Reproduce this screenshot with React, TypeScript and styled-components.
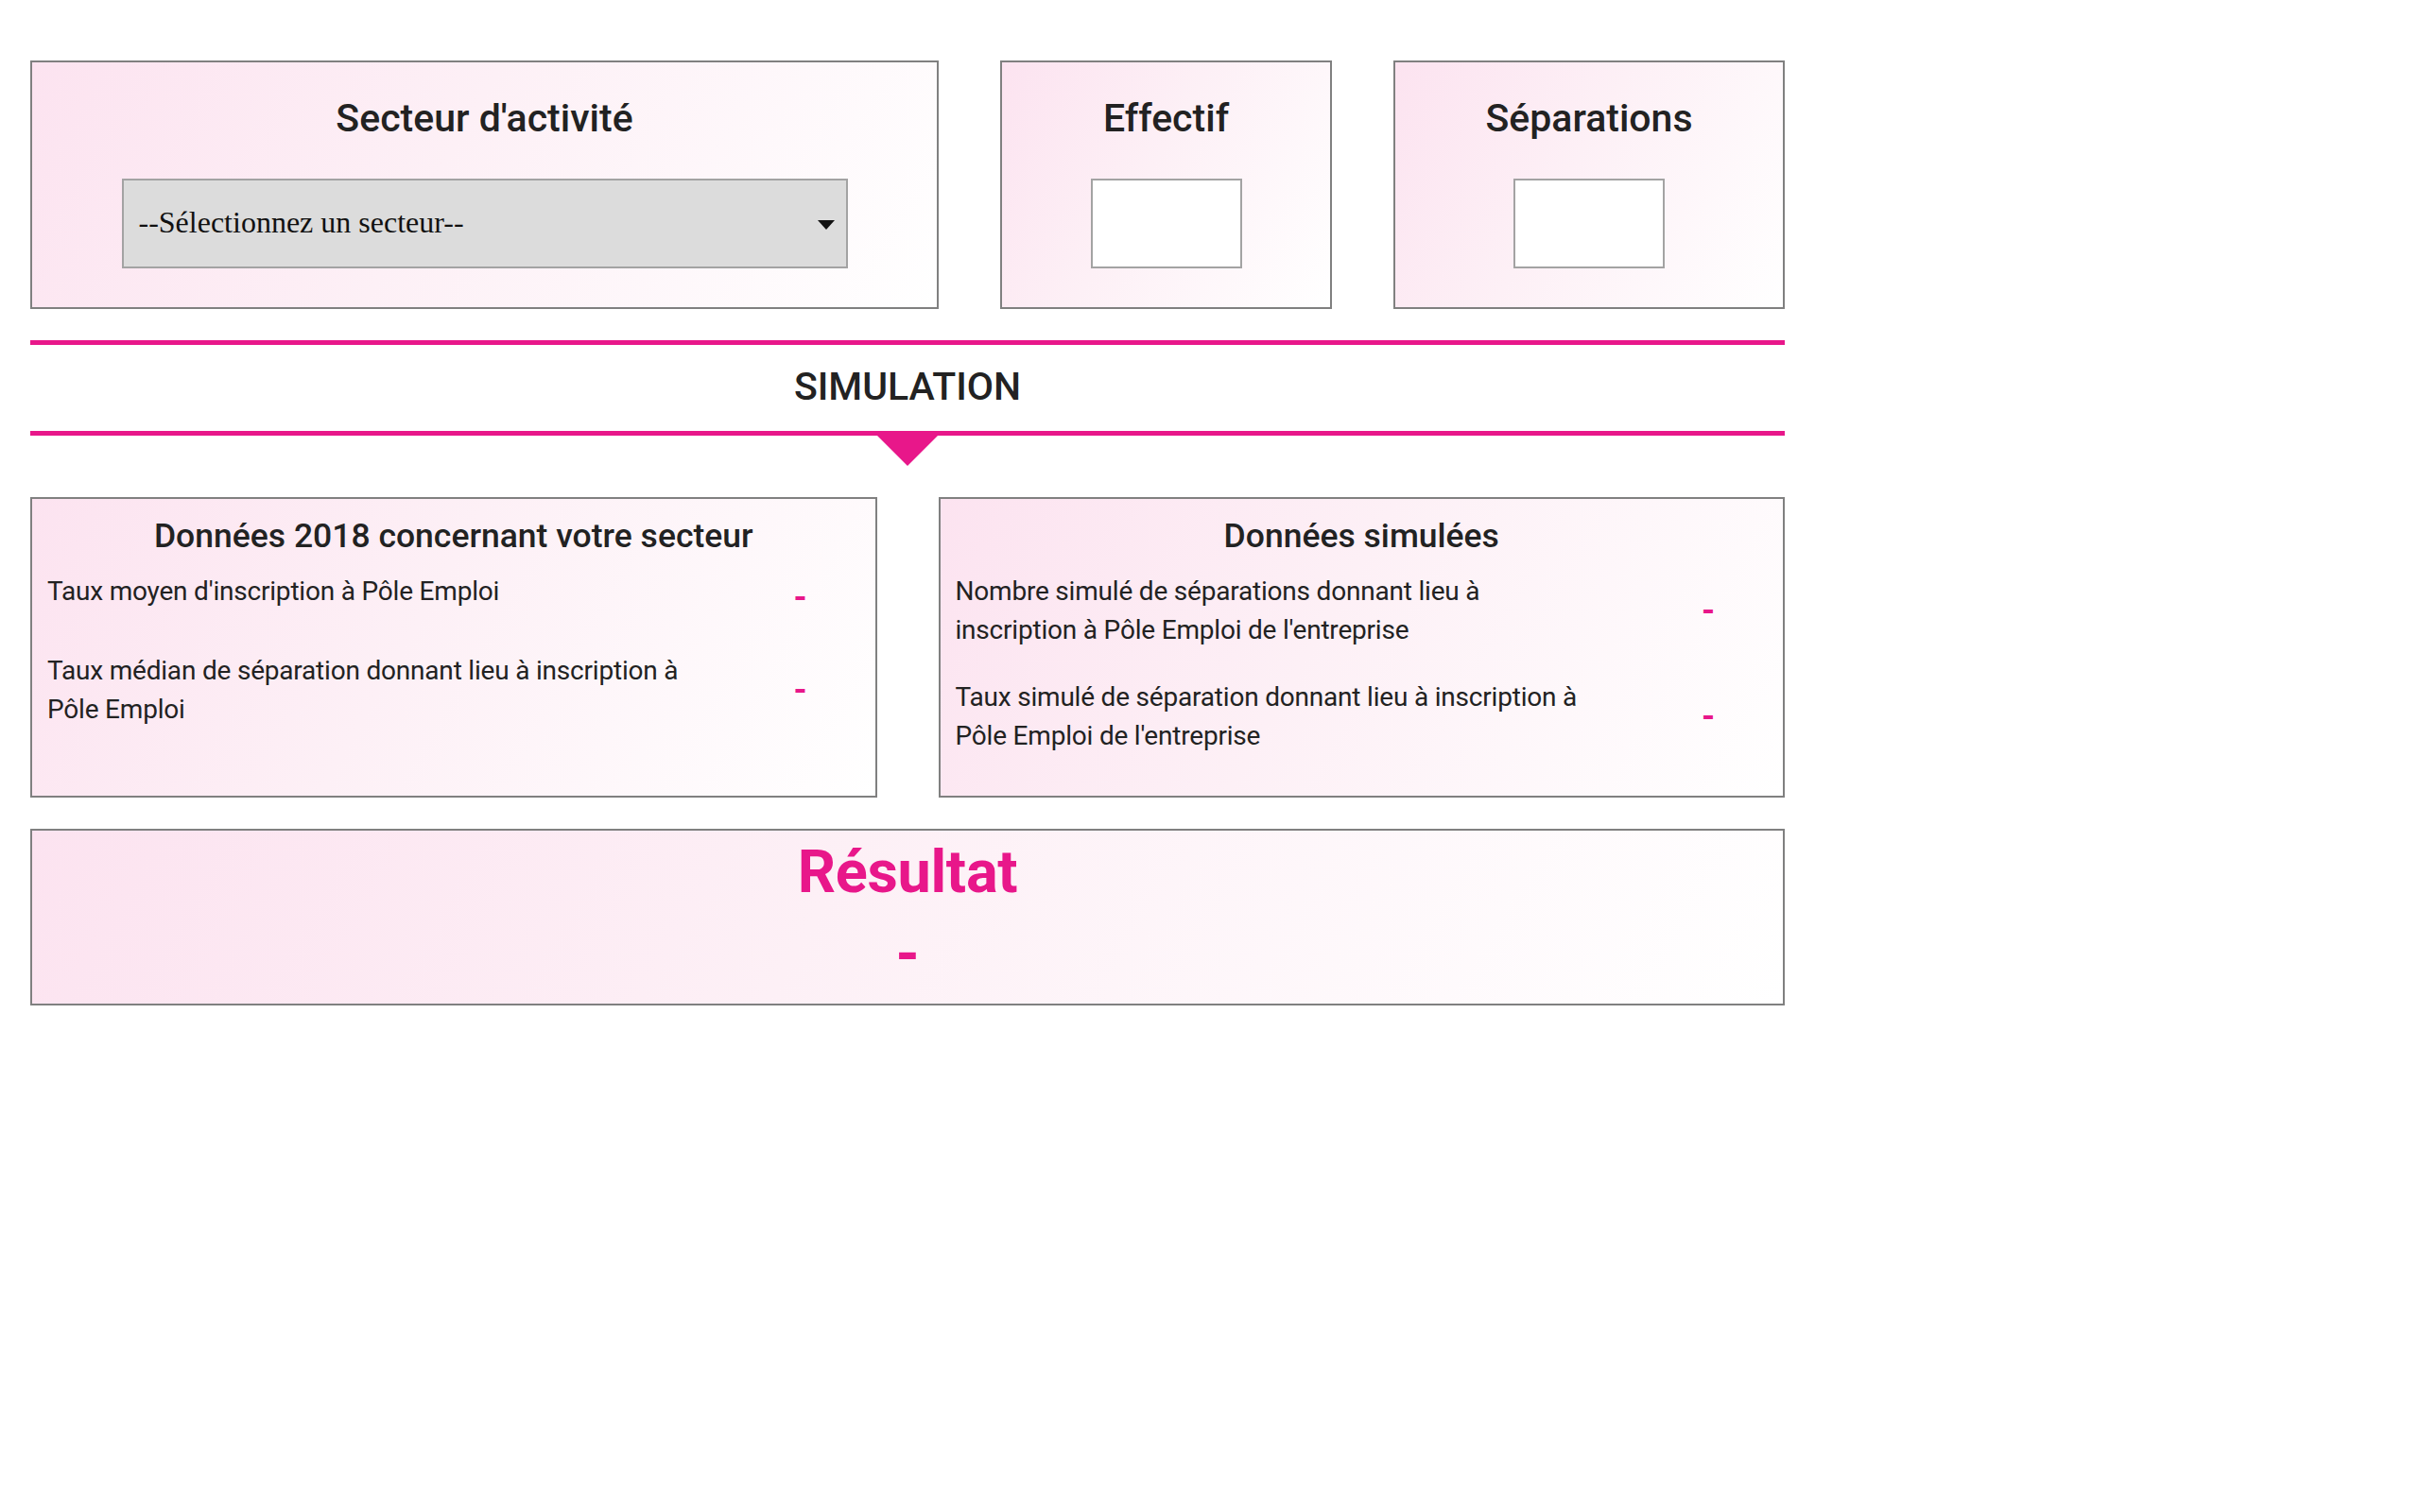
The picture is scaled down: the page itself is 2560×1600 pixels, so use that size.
import React from "react"
import styled, { createGlobalStyle } from "styled-components"

const PINK = "#e8178a"
const INK = "#222222"

const GlobalStyle = createGlobalStyle`
  body {
    margin: 0;
    background: #ffffff;
    font-family: Roboto, "Liberation Sans", sans-serif;
    color: ${INK};
  }
`

const SECTOR_ROWS = [
  { label: "Taux moyen d'inscription à Pôle Emploi", value: "-" },
  {
    label: "Taux médian de séparation donnant lieu à inscription à Pôle Emploi",
    value: "-",
  },
]

const SIMULATED_ROWS = [
  {
    label:
      "Nombre simulé de séparations donnant lieu à inscription à Pôle Emploi de l'entreprise",
    value: "-",
  },
  {
    label:
      "Taux simulé de séparation donnant lieu à inscription à Pôle Emploi de l'entreprise",
    value: "-",
  },
]

export default function App() {
  const [sector, setSector] = React.useState("")
  const [staff, setStaff] = React.useState("")
  const [separations, setSeparations] = React.useState("")

  return (
    <Page>
      <GlobalStyle />
      <InputsRow>
        <InputCard>
          <CardTitle>Secteur d'activité</CardTitle>
          <SelectWrap>
            <Select value={sector} onChange={(e) => setSector(e.target.value)}>
              <option value="">--Sélectionnez un secteur--</option>
            </Select>
            <SelectArrow />
          </SelectWrap>
        </InputCard>
        <InputCard>
          <CardTitle>Effectif</CardTitle>
          <NumberInput
            value={staff}
            onChange={(e) => setStaff(e.target.value)}
          />
        </InputCard>
        <InputCard>
          <CardTitle>Séparations</CardTitle>
          <NumberInput
            value={separations}
            onChange={(e) => setSeparations(e.target.value)}
          />
        </InputCard>
      </InputsRow>

      <SimulationHeader>SIMULATION</SimulationHeader>

      <DataGrid>
        <DataCard>
          <DataTitle>Données 2018 concernant votre secteur</DataTitle>
          {SECTOR_ROWS.map((row) => (
            <DataRow key={row.label}>
              <DataLabel>{row.label}</DataLabel>
              <DataValue>{row.value}</DataValue>
            </DataRow>
          ))}
        </DataCard>
        <DataCard>
          <DataTitle>Données simulées</DataTitle>
          {SIMULATED_ROWS.map((row) => (
            <DataRow key={row.label}>
              <DataLabel>{row.label}</DataLabel>
              <DataValue>{row.value}</DataValue>
            </DataRow>
          ))}
        </DataCard>
      </DataGrid>

      <ResultCard>
        <ResultTitle>Résultat</ResultTitle>
        <ResultValue>-</ResultValue>
      </ResultCard>
    </Page>
  )
}

const Page = styled.div`
  width: 1856px;
  padding: 64px 32px;
  display: flex;
  flex-direction: column;
`

const cardCSS = `
  box-sizing: border-box;
  border: 2px solid #808080;
  background: linear-gradient(120deg, #fce3f0 0%, #fdf0f6 45%, #ffffff 100%);
`

const InputsRow = styled.div`
  display: grid;
  grid-template-columns: 961px 351px 414px;
  gap: 65px;
`

const InputCard = styled.div`
  ${cardCSS}
  display: flex;
  flex-direction: column;
  align-items: center;
  padding: 38px 0 41px;
  gap: 42px;
`

const CardTitle = styled.div`
  font-size: 41px;
  font-weight: 500;
  line-height: 43px;
  color: ${INK};
`

const SelectWrap = styled.div`
  position: relative;
  width: 768px;
  height: 95px;
`

const Select = styled.select`
  appearance: none;
  box-sizing: border-box;
  width: 100%;
  height: 100%;
  margin: 0;
  padding: 0 16px 4px;
  background: #dcdcdc;
  border: 2px solid #a3a3a3;
  border-radius: 0;
  font-family: "Liberation Serif", serif;
  font-size: 32px;
  color: #111111;
  outline: none;
`

const SelectArrow = styled.span`
  position: absolute;
  right: 14px;
  top: 44px;
  width: 0;
  height: 0;
  border-left: 9px solid transparent;
  border-right: 9px solid transparent;
  border-top: 10px solid #111111;
  pointer-events: none;
`

const NumberInput = styled.input`
  box-sizing: border-box;
  width: 160px;
  height: 95px;
  margin: 0;
  background: #ffffff;
  border: 2px solid #a3a3a3;
  border-radius: 0;
  outline: none;
`

const SimulationHeader = styled.div`
  position: relative;
  margin-top: 33px;
  border-top: 5px solid ${PINK};
  border-bottom: 5px solid ${PINK};
  padding: 20px 0 23px;
  text-align: center;
  font-size: 41px;
  font-weight: 500;
  line-height: 48px;
  color: ${INK};

  &::after {
    content: "";
    position: absolute;
    left: 50%;
    bottom: -37px;
    transform: translateX(-50%);
    border-left: 32px solid transparent;
    border-right: 32px solid transparent;
    border-top: 32px solid ${PINK};
  }
`

const DataGrid = styled.div`
  margin-top: 65px;
  display: grid;
  grid-template-columns: 1fr 1fr;
  gap: 65px;
`

const DataCard = styled.div`
  ${cardCSS}
  display: flex;
  flex-direction: column;
  padding: 18px 16px 43px;
`

const DataTitle = styled.div`
  text-align: center;
  font-size: 35.5px;
  font-weight: 500;
  line-height: 43px;
  margin-bottom: 16px;
`

const DataRow = styled.div`
  display: flex;
  align-items: center;
  & + & {
    margin-top: 30px;
  }
`

const DataLabel = styled.div`
  align-self: flex-start;
  flex: 0 0 690px;
  font-size: 28px;
  line-height: 41px;
  letter-spacing: -0.2px;
`

const DataValue = styled.div`
  margin-left: auto;
  margin-right: 3px;
  width: 120px;
  text-align: center;
  font-size: 36px;
  font-weight: 700;
  line-height: 54px;
  color: ${PINK};
`

const ResultCard = styled.div`
  ${cardCSS}
  margin-top: 33px;
  height: 187px;
  display: flex;
  flex-direction: column;
  align-items: center;
  padding-top: 8px;
`

const ResultTitle = styled.div`
  font-size: 63px;
  font-weight: 700;
  line-height: 72px;
  letter-spacing: -0.3px;
  color: ${PINK};
`

const ResultValue = styled.div`
  margin-top: 19px;
  font-size: 64px;
  font-weight: 700;
  line-height: 64px;
  color: ${PINK};
`
